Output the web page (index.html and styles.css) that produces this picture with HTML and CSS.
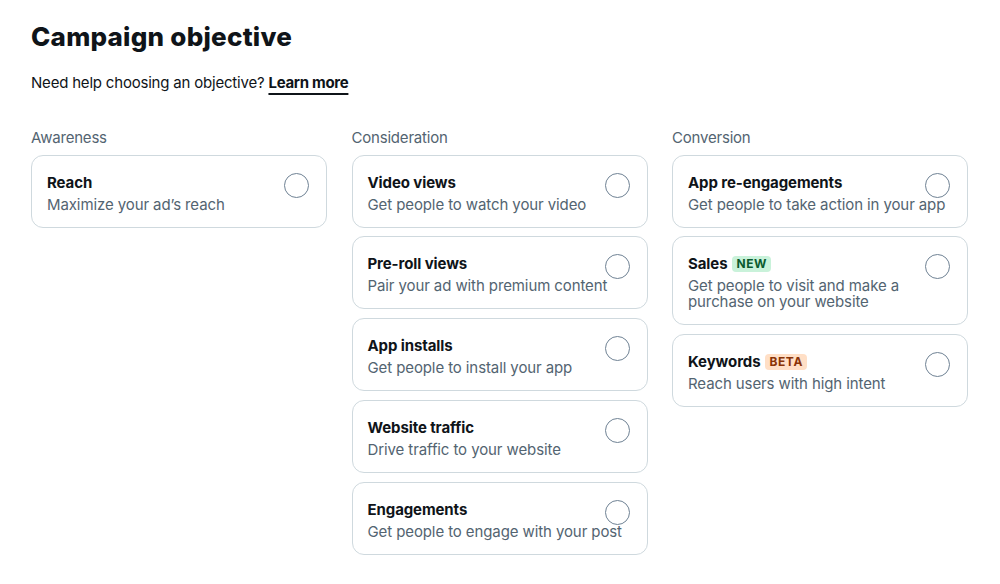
FILE: index.html
```html
<!DOCTYPE html>
<html lang="en">
<head>
<meta charset="utf-8">
<title>Campaign objective</title>
<link rel="stylesheet" href="styles.css">
</head>
<body>
<main class="page">
  <h1 class="title">Campaign objective</h1>
  <p class="help">Need help choosing an objective? <a class="learn" href="#">Learn more</a></p>
  <div class="columns">
    <section class="group">
      <h2 class="group-label">Awareness</h2>
      <div class="card">
        <div class="card-title">Reach</div>
        <div class="card-desc">Maximize your ad’s reach</div>
        <span class="radio"></span>
      </div>
    </section>
    <section class="group">
      <h2 class="group-label">Consideration</h2>
      <div class="card">
        <div class="card-title">Video views</div>
        <div class="card-desc">Get people to watch your video</div>
        <span class="radio"></span>
      </div>
      <div class="card">
        <div class="card-title">Pre-roll views</div>
        <div class="card-desc">Pair your ad with premium content</div>
        <span class="radio"></span>
      </div>
      <div class="card">
        <div class="card-title">App installs</div>
        <div class="card-desc">Get people to install your app</div>
        <span class="radio"></span>
      </div>
      <div class="card">
        <div class="card-title">Website traffic</div>
        <div class="card-desc">Drive traffic to your website</div>
        <span class="radio"></span>
      </div>
      <div class="card">
        <div class="card-title">Engagements</div>
        <div class="card-desc">Get people to engage with your post</div>
        <span class="radio"></span>
      </div>
    </section>
    <section class="group">
      <h2 class="group-label">Conversion</h2>
      <div class="card">
        <div class="card-title">App re-engagements</div>
        <div class="card-desc">Get people to take action in your app</div>
        <span class="radio"></span>
      </div>
      <div class="card">
        <div class="card-title">Sales <span class="badge badge-new">NEW</span></div>
        <div class="card-desc card-desc-wrap">Get people to visit and make a purchase on your website</div>
        <span class="radio"></span>
      </div>
      <div class="card">
        <div class="card-title">Keywords <span class="badge badge-beta">BETA</span></div>
        <div class="card-desc">Reach users with high intent</div>
        <span class="radio"></span>
      </div>
    </section>
  </div>
</main>
</body>
</html>
```

FILE: styles.css
```css
* { box-sizing: border-box; }

html, body {
  margin: 0;
  padding: 0;
  background: #ffffff;
}

body {
  font-family: Inter, "Noto Sans", "Liberation Sans", sans-serif;
  color: #0f1419;
}

.page {
  padding: 20px 32px 0 31px;
}

.title {
  margin: 0;
  font-size: 26px;
  line-height: 34px;
  font-weight: 800;
  letter-spacing: 0.25px;
  color: #0f1419;
}

.help {
  margin: 19px 0 0;
  font-size: 15px;
  line-height: 20px;
  letter-spacing: -0.2px;
  color: #0f1419;
}

.learn {
  color: #0f1419;
  font-weight: 700;
  letter-spacing: -0.3px;
  text-decoration: underline;
  text-decoration-thickness: 2px;
  text-underline-offset: 5px;
}

.columns {
  margin-top: 35px;
  display: grid;
  grid-template-columns: repeat(3, 1fr);
  column-gap: 24.5px;
  width: 937px;
  align-items: start;
}

.group {
  display: flex;
  flex-direction: column;
  gap: 8.75px;
}

.group-label {
  margin: 0 0 -2.25px;
  font-size: 15px;
  line-height: 20px;
  font-weight: 400;
  letter-spacing: -0.2px;
  color: #536471;
}

.card {
  position: relative;
  border: 1px solid #cfd9de;
  border-radius: 12px;
  padding: 17px 17px 14px 15px;
  background: #ffffff;
}

.card-title {
  display: flex;
  align-items: center;
  gap: 5px;
  font-size: 15px;
  line-height: 20px;
  font-weight: 700;
  letter-spacing: -0.1px;
  color: #0f1419;
}

.card-desc {
  margin-top: 4px;
  font-size: 15px;
  line-height: 16px;
  letter-spacing: -0.1px;
  color: #536471;
  white-space: nowrap;
}

.card-desc-wrap {
  white-space: normal;
  padding-right: 40px;
}

.radio {
  position: absolute;
  top: 17px;
  right: 17px;
  width: 25px;
  height: 25px;
  border: 1.5px solid #6f8294;
  border-radius: 50%;
  background: transparent;
}

.badge {
  display: inline-block;
  font-size: 12px;
  line-height: 16px;
  font-weight: 700;
  letter-spacing: 0.6px;
  padding: 0 4px;
  border-radius: 4px;
}

.badge-new {
  background: #c9f2da;
  color: #0a5a2e;
}

.badge-beta {
  background: #ffdfc6;
  color: #8a3306;
}
```
